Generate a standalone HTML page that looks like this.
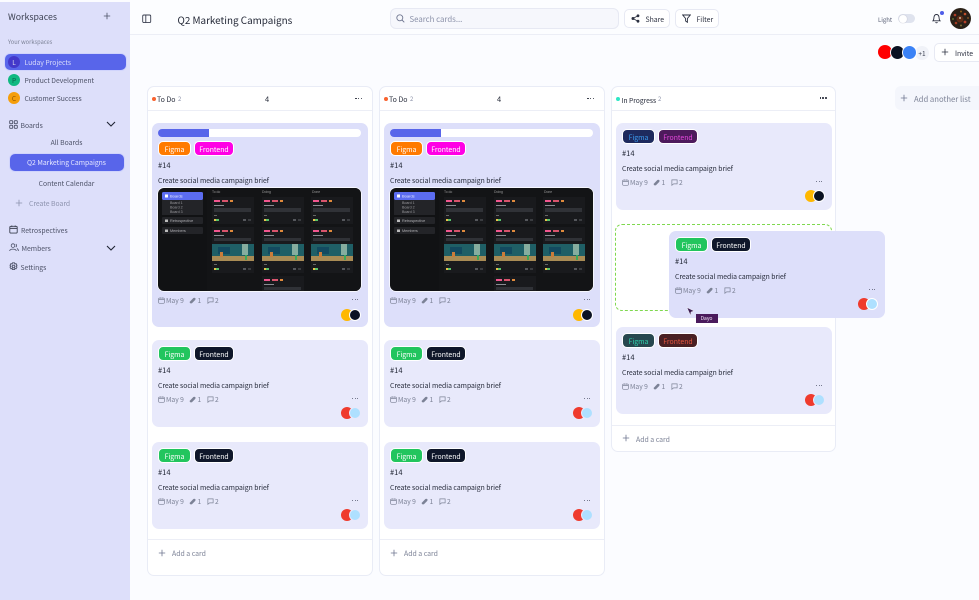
<!DOCTYPE html>
<html><head><meta charset="utf-8"><style>
html,body{margin:0;padding:0}
body{width:979px;height:600px;overflow:hidden;position:relative;background:#fbfcff;font-family:"Noto Sans CJK JP","Liberation Sans",sans-serif;color:#1f2433}
.a{position:absolute;white-space:nowrap;line-height:12px}
.d{margin-top:1px}
#side{position:absolute;left:0;top:2px;width:130px;height:598px;background:#dddffa}
#head{position:absolute;left:130px;top:0;width:849px;height:34px;background:#fcfdff;border-bottom:1px solid #eceef6}
.col{position:absolute;top:86px;width:226px;background:#fff;border:1px solid #e9ecf6;border-radius:7px;box-sizing:border-box}
.hdr{position:absolute;left:0;right:0;top:0;height:23px;border-bottom:1px solid #eceef6}
.card{position:absolute;width:216px;height:87px;background:#e8e9fb;border-radius:7px}
.card.big{height:204px;background:#dddffa}
.card.drag{background:#dddffa}
.tag{position:absolute;top:6px;height:15px;line-height:15.500px;box-sizing:border-box;border:1px solid #fff;border-radius:5px;font-size:6.900px;text-align:center;color:#fff}
.t1{left:6px;width:33px}.t2{left:42px;width:40px}
.num{position:absolute;left:6px;top:25px;font-size:7.500px;line-height:12px}
.ttl{position:absolute;left:6px;top:39px;font-size:6.800px;line-height:12px;white-space:nowrap}
.meta{position:absolute;left:6px;top:53px;height:12px;width:80px;font-size:6.700px;line-height:12px;color:#7c8296}
.meta svg{position:absolute;top:2.500px}
.meta span{position:absolute;top:0}
.more{position:absolute;left:200px;top:58px;width:9px;height:2px}
.more i{position:absolute;top:0;width:1.300px;height:1.300px;border-radius:50%;background:#50556a}
.av{position:absolute;left:188px;top:66px;width:22px;height:14px}
.av i{position:absolute;top:1px;width:12px;height:12px;border-radius:50%;box-sizing:border-box}
.big .tag{top:18px}.big .num{top:37px}.big .ttl{top:51px}.big .meta{top:171px}.big .more{top:176px}.big .av{top:185px}
.bar{position:absolute;left:6px;top:6px;width:203px;height:8px;background:#fff;border-radius:4px;overflow:hidden}
.bar i{position:absolute;left:0;top:0;width:51px;height:8px;background:#5865ea}
.shot{position:absolute;left:6px;top:65px;border-radius:6px;box-shadow:0 0 0 .7px #fff}
.g{background:#22c55e}.n{background:#0f172a}.o{background:#ff7a00}.m{background:#ff00e5}
.sb{font-size:6.800px;color:#4c5167}
.dots{width:8px;height:2px}
.dots i{position:absolute;top:0;width:1.700px;height:1.700px;border-radius:50%;background:#1f2433}
.lab{font-size:6.900px;color:#7c8296}
</style></head><body>
<svg width="0" height="0" style="position:absolute">
<defs>
<symbol id="cal" viewBox="0 0 8 8"><rect x=".7" y="1.200" width="6.600" height="6" rx="1" fill="none" stroke="currentColor" stroke-width=".8"/><path d="M.7 3h6.600M2.500.4v1.400M5.500.4v1.400" stroke="currentColor" stroke-width=".8" fill="none"/></symbol>
<symbol id="clip" viewBox="0 0 8 8"><path d="M1.200 5.200L5 1.200Q6 .4 7 1.200T7 3.400L3.500 7Q2.200 7.800 1.200 6.800T1.200 5.200Z" fill="currentColor"/></symbol>
<symbol id="msg" viewBox="0 0 8 8"><path d="M1 1h6v4.600H3L1 7.200Z" fill="none" stroke="currentColor" stroke-width=".8"/></symbol>
<symbol id="plus" viewBox="0 0 10 10"><path d="M5 1v8M1 5h8" stroke="currentColor" stroke-width="1" fill="none"/></symbol>
<symbol id="chev" viewBox="0 0 10 6"><path d="M1 1l4 4 4-4" stroke="#1f2433" stroke-width="1.100" fill="none"/></symbol>
<symbol id="mini" viewBox="0 0 42 27"><rect width="42" height="27" fill="#191a1d"/><rect x="2" y="3" width="6" height="2" fill="#f0568f"/><rect x="10" y="3" width="6" height="2" fill="#d9546c"/><rect x="18" y="3" width="3" height="2" fill="#e08a3c"/><rect x="2" y="8" width="10" height="1" fill="#8a8c92"/><rect x="2" y="11" width="37" height="4" fill="#303237"/><rect x="2" y="18" width="3" height="1" fill="#666"/><rect x="2" y="22" width="2" height="2" fill="#e9c14b"/><rect x="4" y="22" width="3" height="2" fill="#57c26a"/><rect x="31" y="22" width="3" height="2" fill="#55575c"/><rect x="36" y="22" width="3" height="2" fill="#3a3c40"/></symbol>
<symbol id="mini2" viewBox="0 0 42 46"><rect width="42" height="46" fill="#191a1d"/><rect x="2" y="3" width="6" height="2" fill="#f0568f"/><rect x="10" y="3" width="6" height="2" fill="#d9546c"/><rect x="18" y="3" width="3" height="2" fill="#e08a3c"/><rect x="2" y="8" width="10" height="1" fill="#8a8c92"/><rect x="2" y="11" width="37" height="3" fill="#303237"/><rect y="17" width="42" height="17" fill="#1f5f66"/><rect x="6" y="20" width="12" height="7" fill="#134a60"/><rect x="30" y="17" width="6" height="11" fill="#86ad9f"/><rect y="29" width="42" height="5" fill="#a98c55"/><rect x="8" y="25" width="3" height="5" fill="#c97c3a"/><rect x="33" y="28" width="2" height="5" fill="#3ea85a"/><rect x="2" y="37" width="3" height="1" fill="#666"/><rect x="2" y="41" width="2" height="2" fill="#e9c14b"/><rect x="4" y="41" width="3" height="2" fill="#57c26a"/><rect x="31" y="41" width="3" height="2" fill="#55575c"/><rect x="36" y="41" width="3" height="2" fill="#3a3c40"/></symbol>
<symbol id="shot" viewBox="0 0 203 103">
<rect width="203" height="103" fill="#111214"/>
<rect x="49" width="154" height="103" fill="#131416"/>
<rect x="4" y="4" width="41" height="8" rx="1.500" fill="#5b6cf0"/>
<rect x="7" y="6.500" width="3" height="3" fill="#fff"/><text x="12" y="9.600" font-size="4" fill="#e6e9ff" font-family="Liberation Sans,sans-serif">Boards</text>
<rect x="4" y="12" width="41" height="15" fill="#232428"/>
<text x="12" y="16" font-size="3.600" fill="#9a9a9e" font-family="Liberation Sans,sans-serif">Board 1</text><text x="12" y="20.500" font-size="3.600" fill="#9a9a9e" font-family="Liberation Sans,sans-serif">Board 2</text><text x="12" y="25" font-size="3.600" fill="#9a9a9e" font-family="Liberation Sans,sans-serif">Board 3</text>
<rect x="4" y="29" width="41" height="7" rx="1" fill="#232428"/><rect x="7" y="31.500" width="3" height="2.500" fill="#bbb"/><text x="12" y="34" font-size="3.800" fill="#b0b0b4" font-family="Liberation Sans,sans-serif">Retrospective</text>
<rect x="4" y="39" width="41" height="7" rx="1" fill="#232428"/><rect x="7" y="41.500" width="3" height="2.500" fill="#bbb"/><text x="12" y="44" font-size="3.800" fill="#b0b0b4" font-family="Liberation Sans,sans-serif">Members</text>
<text x="54" y="5" font-size="3.400" fill="#9a9a9a" font-family="Liberation Sans,sans-serif">To do</text><text x="104" y="5" font-size="3.400" fill="#9a9a9a" font-family="Liberation Sans,sans-serif">Doing</text><text x="154" y="5" font-size="3.400" fill="#9a9a9a" font-family="Liberation Sans,sans-serif">Done</text>
<use href="#mini" x="54" y="9" width="42" height="27"/><use href="#mini" x="104" y="9" width="42" height="27"/><use href="#mini" x="153" y="9" width="42" height="27"/>
<use href="#mini2" x="54" y="39" width="42" height="46"/><use href="#mini2" x="104" y="39" width="42" height="46"/><use href="#mini2" x="153" y="39" width="42" height="46"/>
<rect x="104" y="88" width="42" height="15" fill="#191a1d"/><rect x="106" y="91" width="6" height="2" fill="#f0568f"/><rect x="114" y="91" width="6" height="2" fill="#d9546c"/><rect x="122" y="91" width="3" height="2" fill="#e08a3c"/><rect x="106" y="96" width="10" height="1" fill="#8a8c92"/><rect x="106" y="99" width="37" height="3" fill="#303237"/>
</symbol>
</defs></svg>

<div id="side"></div>
<div class="a d" style="left:8px;top:10px;font-size:8.800px;color:#3c4152">Workspaces</div>
<svg class="a" style="left:103px;top:12px;color:#4c5167" width="8" height="8"><use href="#plus" width="8" height="8"/></svg>
<div class="a" style="left:8px;top:36px;font-size:5.700px;color:#7c8296">Your workspaces</div>
<div class="a" style="left:3.500px;top:52.500px;width:123px;height:18px;box-sizing:border-box;background:#5865ea;border:1px solid #d0d4fc;border-radius:6px"></div>
<div class="a" style="left:8px;top:56px;width:12px;height:12px;border-radius:50%;background:#4338ca;color:#dde;font-size:6.500px;text-align:center">L</div>
<div class="a sb" style="left:24.500px;top:56px;color:#d9dcfb">Luday Projects</div>
<div class="a" style="left:8px;top:74px;width:12px;height:12px;border-radius:50%;background:#10b981;color:#0b5e46;font-size:6.500px;text-align:center">P</div>
<div class="a sb" style="left:24.500px;top:74px">Product Development</div>
<div class="a" style="left:8px;top:92px;width:12px;height:12px;border-radius:50%;background:#f59e0b;color:#8a5200;font-size:6.500px;text-align:center">C</div>
<div class="a sb" style="left:24.500px;top:92px">Customer Success</div>
<svg class="a" style="left:9px;top:120px" width="9" height="9" fill="none" stroke="#4c5167" stroke-width=".9"><rect x=".7" y=".7" width="3" height="3" rx=".6"/><rect x="5.300" y=".7" width="3" height="3" rx=".6"/><rect x=".7" y="5.300" width="3" height="3" rx=".6"/><rect x="5.300" y="5.300" width="3" height="3" rx=".6"/></svg>
<div class="a sb" style="left:20.500px;top:119px">Boards</div>
<svg class="a" style="left:106px;top:121px" width="10" height="6"><use href="#chev" width="10" height="6"/></svg>
<div class="a sb" style="left:0;width:133px;text-align:center;top:136px">All Boards</div>
<div class="a" style="left:8.500px;top:152.500px;width:116px;height:19px;box-sizing:border-box;background:#5865ea;border:1px solid #d0d4fc;border-radius:6px"></div>
<div class="a sb" style="left:0;width:133px;text-align:center;top:156px;color:#e6e8ff">Q2 Marketing Campaigns</div>
<div class="a sb" style="left:0;width:133px;text-align:center;top:177px">Content Calendar</div>
<svg class="a" style="left:15px;top:199px;color:#8c92ad" width="8" height="8"><use href="#plus" width="8" height="8"/></svg>
<div class="a sb" style="left:29px;top:197px;color:#8c92ad">Create Board</div>
<svg class="a" style="left:9px;top:225px;color:#3c4152" width="9" height="9"><use href="#cal" width="9" height="9"/></svg>
<div class="a sb" style="left:21px;top:224px">Retrospectives</div>
<svg class="a" style="left:9px;top:243px" width="10" height="9" fill="none" stroke="#4c5167" stroke-width=".8"><circle cx="4" cy="2.600" r="1.800"/><path d="M.7 8c0-2.500 6.300-2.500 6.600 0M6.800 1q1.600 1.500 0 3.200M8 5.500q1.400.8 1.400 2.500"/></svg>
<div class="a sb" style="left:21.500px;top:242px">Members</div>
<svg class="a" style="left:106px;top:245px" width="10" height="6"><use href="#chev" width="10" height="6"/></svg>
<svg class="a" style="left:8.500px;top:262px" width="9" height="9" fill="none" stroke="#4c5167" stroke-width=".9"><circle cx="4.500" cy="4.500" r="1.300"/><path d="M3.500.8h2l.3 1.200 1.200-.4 1 1.700-.9.900.9.900-1 1.700-1.200-.4-.3 1.200h-2l-.3-1.200-1.200.4-1-1.700.9-.9-.9-.9 1-1.700 1.200.4z"/></svg>
<div class="a sb" style="left:20.500px;top:261px">Settings</div>

<div id="head"></div>
<svg class="a" style="left:141.500px;top:14px" width="10" height="10" fill="none" stroke="#3c4152" stroke-width=".9"><rect x=".7" y="1" width="8" height="7.600" rx="1.200"/><path d="M3.800 1v7.600"/></svg>
<div class="a" style="left:177.500px;top:13.500px;font-size:9.900px;color:#1f2433">Q2 Marketing Campaigns</div>
<div class="a" style="left:390px;top:8px;width:229px;height:21px;box-sizing:border-box;background:#f6f7fc;border:1px solid #e7e9f3;border-radius:6px"></div>
<svg class="a" style="left:396px;top:14px" width="9" height="9" fill="none" stroke="#6f7690" stroke-width=".9"><circle cx="3.800" cy="3.800" r="3"/><path d="M6 6l2.300 2.300"/></svg>
<div class="a d" style="left:409.500px;top:13px;font-size:7.800px;color:#8a90a8">Search cards...</div>
<div class="a" style="left:624px;top:9px;width:46px;height:19px;box-sizing:border-box;background:#fff;border:1px solid #e7e9f3;border-radius:5px"></div>
<svg class="a" style="left:631px;top:14px" width="9" height="9" fill="#2b3040" stroke="#2b3040" stroke-width=".8"><path d="M6.800 1.800L2 4.500l4.800 2.700" fill="none"/><circle cx="2" cy="4.500" r="1.100"/><circle cx="7" cy="1.800" r="1"/><circle cx="7" cy="7.200" r="1"/></svg>
<div class="a" style="left:645.500px;top:13px;font-size:6.900px;color:#2b3040">Share</div>
<div class="a" style="left:675px;top:9px;width:44px;height:19px;box-sizing:border-box;background:#fff;border:1px solid #e7e9f3;border-radius:5px"></div>
<svg class="a" style="left:682px;top:14px" width="9" height="9" fill="none" stroke="#2b3040" stroke-width=".9"><path d="M.7 1h7.600L5.400 4.500v3.800L3.600 7V4.500z"/></svg>
<div class="a" style="left:696.500px;top:13px;font-size:6.900px;color:#2b3040">Filter</div>
<div class="a d" style="left:878px;top:13px;font-size:6px;color:#5a6076">Light</div>
<div class="a" style="left:898px;top:14px;width:17px;height:9px;border-radius:5px;background:#dfe3ee"></div>
<div class="a" style="left:898.500px;top:14.500px;width:8px;height:8px;border-radius:50%;background:#fff;box-shadow:0 0 1px #aab"></div>
<svg class="a" style="left:932px;top:13px" width="9" height="11" fill="none" stroke="#2b3040" stroke-width=".9"><path d="M1 7.800c1-1 .8-2.300 1-3.800C2.300 2.400 3.200 1.500 4.500 1.500S6.700 2.400 7 4c.2 1.500 0 2.800 1 3.800zM3.500 9.300q1 1 2 0"/></svg>
<div class="a" style="left:940px;top:10.500px;width:4px;height:4px;border-radius:50%;background:#4f5de8"></div>
<svg class="a" style="left:950px;top:8px" width="21" height="21"><circle cx="10.500" cy="10.500" r="10.500" fill="#2a2118"/><circle cx="10" cy="11" r="3.500" fill="#5f2c16"/><circle cx="5" cy="7" r="1.300" fill="#b03e26"/><circle cx="15" cy="6" r="1.300" fill="#c04f2a"/><circle cx="6" cy="15" r="1.300" fill="#a33a22"/><circle cx="15" cy="14" r="1.400" fill="#b8402a"/><circle cx="11" cy="3.500" r="1" fill="#8f5c1c"/><circle cx="11" cy="17.500" r="1" fill="#7f6c34"/><circle cx="3" cy="11" r="1" fill="#5d6a32"/><circle cx="18" cy="10" r="1" fill="#7f5024"/><circle cx="10" cy="10" r="1" fill="#cdbfa3"/></svg>

<div class="a" style="left:915px;top:45.500px;width:14px;height:14px;border-radius:50%;background:#f0f2f8;color:#3c4152;font-size:6.500px;text-align:center;line-height:15px">+1</div>
<div class="a" style="left:877.500px;top:45px;width:14px;height:14px;border-radius:50%;background:#ff0000"></div>
<div class="a" style="left:889.500px;top:44.500px;width:15px;height:15px;border-radius:50%;background:#0b1222;box-sizing:border-box;border:1px solid #fff"></div>
<div class="a" style="left:902px;top:44.500px;width:15px;height:15px;border-radius:50%;background:#3b82f6;box-sizing:border-box;border:1px solid #fff"></div>
<div class="a" style="left:934px;top:43px;width:60px;height:19px;box-sizing:border-box;background:#fff;border:1px solid #e7e9f3;border-radius:5px"></div>
<svg class="a" style="left:941px;top:48px;color:#2b3040" width="8" height="8"><use href="#plus" width="8" height="8"/></svg>
<div class="a" style="left:955px;top:47px;font-size:6.900px;color:#2b3040">Invite</div>
<div class="a" style="left:895px;top:86px;width:100px;height:24px;background:#f4f6fc;border-radius:6px"></div>
<svg class="a" style="left:900px;top:94px;color:#6f7690" width="8" height="8"><use href="#plus" width="8" height="8"/></svg>
<div class="a d" style="left:914px;top:92.500px;font-size:7.700px;color:#7c8296">Add another list</div>

<!-- Column 1 -->
<div class="col" style="left:147px;height:490px"><div class="hdr"></div></div>
<div class="a" style="left:151.500px;top:96.500px;width:4px;height:4px;border-radius:50%;background:#f9632f"></div>
<div class="a d" style="left:157px;top:93px;font-size:7px">To Do</div><div class="a d" style="left:178px;top:92px;font-size:6px;color:#8a90a8">2</div>
<div class="a d" style="left:265px;top:93px;font-size:7.500px">4</div>
<div class="a dots" style="left:355px;top:97.500px"><i style="left:0"></i><i style="left:2.800px"></i><i style="left:5.600px"></i></div>

<div class="card big" style="left:152px;top:123px"><div class="bar"><i></i></div><div class="tag o t1">Figma</div><div class="tag m t2">Frontend</div><div class="num">#14</div><div class="ttl">Create social media campaign brief</div>
<svg class="shot" width="203" height="103"><use href="#shot" width="203" height="103"/></svg>
<div class="meta"><svg width="7" height="7" color="#7c8296"><use href="#cal" width="7" height="7"/></svg><span style="left:8px">May 9</span><svg style="left:31px" width="7" height="7" color="#7c8296"><use href="#clip" width="7" height="7"/></svg><span style="left:39.500px">1</span><svg style="left:49px" width="7" height="7" color="#7c8296"><use href="#msg" width="7" height="7"/></svg><span style="left:57px">2</span></div>
<div class="more"><i style="left:0"></i><i style="left:2.500px"></i><i style="left:5px"></i></div>
<div class="av"><i style="left:1px;background:#ffb800"></i><i style="left:9px;background:#0b1222;border:1px solid #fff"></i></div></div>

<div class="card" style="left:152px;top:340px"><div class="tag g t1">Figma</div><div class="tag n t2">Frontend</div><div class="num">#14</div><div class="ttl">Create social media campaign brief</div>
<div class="meta"><svg width="7" height="7" color="#7c8296"><use href="#cal" width="7" height="7"/></svg><span style="left:8px">May 9</span><svg style="left:31px" width="7" height="7" color="#7c8296"><use href="#clip" width="7" height="7"/></svg><span style="left:39.500px">1</span><svg style="left:49px" width="7" height="7" color="#7c8296"><use href="#msg" width="7" height="7"/></svg><span style="left:57px">2</span></div>
<div class="more"><i style="left:0"></i><i style="left:2.500px"></i><i style="left:5px"></i></div>
<div class="av"><i style="left:1px;background:#ef3b2d"></i><i style="left:9px;background:#aee0ff;border:1px solid #e8e9fb"></i></div></div>

<div class="card" style="left:152px;top:442px"><div class="tag g t1">Figma</div><div class="tag n t2">Frontend</div><div class="num">#14</div><div class="ttl">Create social media campaign brief</div>
<div class="meta"><svg width="7" height="7" color="#7c8296"><use href="#cal" width="7" height="7"/></svg><span style="left:8px">May 9</span><svg style="left:31px" width="7" height="7" color="#7c8296"><use href="#clip" width="7" height="7"/></svg><span style="left:39.500px">1</span><svg style="left:49px" width="7" height="7" color="#7c8296"><use href="#msg" width="7" height="7"/></svg><span style="left:57px">2</span></div>
<div class="more"><i style="left:0"></i><i style="left:2.500px"></i><i style="left:5px"></i></div>
<div class="av"><i style="left:1px;background:#ef3b2d"></i><i style="left:9px;background:#aee0ff;border:1px solid #e8e9fb"></i></div></div>

<div class="a" style="left:148px;top:539px;width:224px;height:1px;background:#eceef6"></div>
<svg class="a" style="left:158px;top:549px;color:#6f7690" width="8" height="8"><use href="#plus" width="8" height="8"/></svg>
<div class="a lab" style="left:172px;top:547px">Add a card</div>

<!-- Column 2 -->
<div class="col" style="left:379px;height:490px"><div class="hdr"></div></div>
<div class="a" style="left:383.500px;top:96.500px;width:4px;height:4px;border-radius:50%;background:#f9632f"></div>
<div class="a d" style="left:389px;top:93px;font-size:7px">To Do</div><div class="a d" style="left:410px;top:92px;font-size:6px;color:#8a90a8">2</div>
<div class="a d" style="left:497px;top:93px;font-size:7.500px">4</div>
<div class="a dots" style="left:587px;top:97.500px"><i style="left:0"></i><i style="left:2.800px"></i><i style="left:5.600px"></i></div>

<div class="card big" style="left:384px;top:123px"><div class="bar"><i></i></div><div class="tag o t1">Figma</div><div class="tag m t2">Frontend</div><div class="num">#14</div><div class="ttl">Create social media campaign brief</div>
<svg class="shot" width="203" height="103"><use href="#shot" width="203" height="103"/></svg>
<div class="meta"><svg width="7" height="7" color="#7c8296"><use href="#cal" width="7" height="7"/></svg><span style="left:8px">May 9</span><svg style="left:31px" width="7" height="7" color="#7c8296"><use href="#clip" width="7" height="7"/></svg><span style="left:39.500px">1</span><svg style="left:49px" width="7" height="7" color="#7c8296"><use href="#msg" width="7" height="7"/></svg><span style="left:57px">2</span></div>
<div class="more"><i style="left:0"></i><i style="left:2.500px"></i><i style="left:5px"></i></div>
<div class="av"><i style="left:1px;background:#ffb800"></i><i style="left:9px;background:#0b1222;border:1px solid #fff"></i></div></div>

<div class="card" style="left:384px;top:340px"><div class="tag g t1">Figma</div><div class="tag n t2">Frontend</div><div class="num">#14</div><div class="ttl">Create social media campaign brief</div>
<div class="meta"><svg width="7" height="7" color="#7c8296"><use href="#cal" width="7" height="7"/></svg><span style="left:8px">May 9</span><svg style="left:31px" width="7" height="7" color="#7c8296"><use href="#clip" width="7" height="7"/></svg><span style="left:39.500px">1</span><svg style="left:49px" width="7" height="7" color="#7c8296"><use href="#msg" width="7" height="7"/></svg><span style="left:57px">2</span></div>
<div class="more"><i style="left:0"></i><i style="left:2.500px"></i><i style="left:5px"></i></div>
<div class="av"><i style="left:1px;background:#ef3b2d"></i><i style="left:9px;background:#aee0ff;border:1px solid #e8e9fb"></i></div></div>

<div class="card" style="left:384px;top:442px"><div class="tag g t1">Figma</div><div class="tag n t2">Frontend</div><div class="num">#14</div><div class="ttl">Create social media campaign brief</div>
<div class="meta"><svg width="7" height="7" color="#7c8296"><use href="#cal" width="7" height="7"/></svg><span style="left:8px">May 9</span><svg style="left:31px" width="7" height="7" color="#7c8296"><use href="#clip" width="7" height="7"/></svg><span style="left:39.500px">1</span><svg style="left:49px" width="7" height="7" color="#7c8296"><use href="#msg" width="7" height="7"/></svg><span style="left:57px">2</span></div>
<div class="more"><i style="left:0"></i><i style="left:2.500px"></i><i style="left:5px"></i></div>
<div class="av"><i style="left:1px;background:#ef3b2d"></i><i style="left:9px;background:#aee0ff;border:1px solid #e8e9fb"></i></div></div>

<div class="a" style="left:380px;top:539px;width:224px;height:1px;background:#eceef6"></div>
<svg class="a" style="left:390px;top:549px;color:#6f7690" width="8" height="8"><use href="#plus" width="8" height="8"/></svg>
<div class="a lab" style="left:404px;top:547px">Add a card</div>

<!-- Column 3 -->
<div class="col" style="left:611px;height:366px;width:225px"><div class="hdr"></div></div>
<div class="a" style="left:615.500px;top:96.500px;width:4px;height:4px;border-radius:50%;background:#2ee6c5"></div>
<div class="a d" style="left:621.500px;top:93px;font-size:6.700px">In Progress</div><div class="a d" style="left:658px;top:92px;font-size:6px;color:#8a90a8">2</div>
<div class="a dots" style="left:819.500px;top:97px"><i style="left:0"></i><i style="left:2.800px"></i><i style="left:5.600px"></i></div>

<div class="card" style="left:616px;top:123px"><div class="tag t1" style="background:#1e2a5e;color:#3b9cf0">Figma</div><div class="tag t2" style="background:#4d1a5c;color:#e84ae0">Frontend</div><div class="num">#14</div><div class="ttl">Create social media campaign brief</div>
<div class="meta"><svg width="7" height="7" color="#7c8296"><use href="#cal" width="7" height="7"/></svg><span style="left:8px">May 9</span><svg style="left:31px" width="7" height="7" color="#7c8296"><use href="#clip" width="7" height="7"/></svg><span style="left:39.500px">1</span><svg style="left:49px" width="7" height="7" color="#7c8296"><use href="#msg" width="7" height="7"/></svg><span style="left:57px">2</span></div>
<div class="more"><i style="left:0"></i><i style="left:2.500px"></i><i style="left:5px"></i></div>
<div class="av"><i style="left:1px;background:#ffb800"></i><i style="left:9px;background:#0b1222;border:1px solid #fff"></i></div></div>

<div class="a" style="left:615px;top:224px;width:217px;height:87px;box-sizing:border-box;border:1.300px dashed #7fd84f;border-radius:7px"></div>

<div class="card" style="left:616px;top:327px"><div class="tag t1" style="background:#27474f;color:#2fd3ad">Figma</div><div class="tag t2" style="background:#4a2023;color:#e8573f">Frontend</div><div class="num">#14</div><div class="ttl">Create social media campaign brief</div>
<div class="meta"><svg width="7" height="7" color="#7c8296"><use href="#cal" width="7" height="7"/></svg><span style="left:8px">May 9</span><svg style="left:31px" width="7" height="7" color="#7c8296"><use href="#clip" width="7" height="7"/></svg><span style="left:39.500px">1</span><svg style="left:49px" width="7" height="7" color="#7c8296"><use href="#msg" width="7" height="7"/></svg><span style="left:57px">2</span></div>
<div class="more"><i style="left:0"></i><i style="left:2.500px"></i><i style="left:5px"></i></div>
<div class="av"><i style="left:1px;background:#ef3b2d"></i><i style="left:9px;background:#aee0ff;border:1px solid #e8e9fb"></i></div></div>

<div class="a" style="left:612px;top:424.500px;width:223px;height:1px;background:#eceef6"></div>
<svg class="a" style="left:622px;top:434px;color:#6f7690" width="8" height="8"><use href="#plus" width="8" height="8"/></svg>
<div class="a lab" style="left:636px;top:432.500px">Add a card</div>

<!-- Dragged card -->
<div class="card drag" style="left:669px;top:231px"><div class="tag g t1">Figma</div><div class="tag n t2">Frontend</div><div class="num">#14</div><div class="ttl">Create social media campaign brief</div>
<div class="meta"><svg width="7" height="7" color="#7c8296"><use href="#cal" width="7" height="7"/></svg><span style="left:8px">May 9</span><svg style="left:31px" width="7" height="7" color="#7c8296"><use href="#clip" width="7" height="7"/></svg><span style="left:39.500px">1</span><svg style="left:49px" width="7" height="7" color="#7c8296"><use href="#msg" width="7" height="7"/></svg><span style="left:57px">2</span></div>
<div class="more"><i style="left:0"></i><i style="left:2.500px"></i><i style="left:5px"></i></div>
<div class="av"><i style="left:1px;background:#ef3b2d"></i><i style="left:9px;background:#aee0ff;border:1px solid #fff"></i></div></div>
<svg class="a" style="left:686px;top:307px" width="9" height="9"><path d="M1 .5L8 4 5 5 4.500 8.500Z" fill="#3a1a50" stroke="#fff" stroke-width=".4"/></svg>
<div class="a" style="left:695.500px;top:314px;width:22px;height:9px;background:#4a1a5c;color:#f2e6f7;font-size:5px;line-height:9px;text-align:center">Dayo</div>
</body></html>
